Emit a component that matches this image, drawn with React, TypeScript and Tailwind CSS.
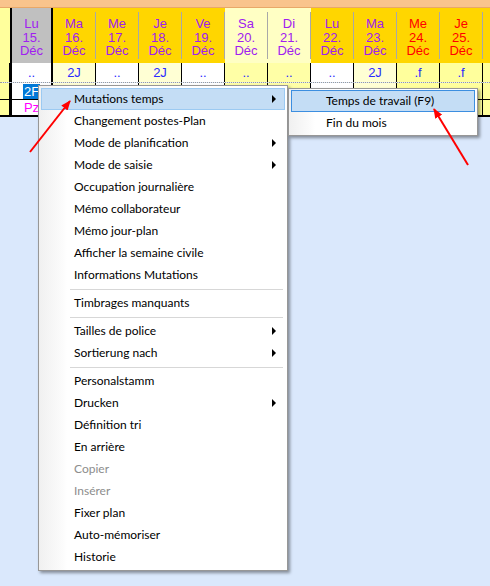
import React from 'react'

type Col = { d: string; n: string; bg: string; fg: string; sel?: boolean }

const COLS: Col[] = [
  { d: 'Lu', n: '15.', bg: 'bg-[#c0c0c0]', fg: 'text-[#a020f0]', sel: true },
  { d: 'Ma', n: '16.', bg: 'bg-[#ffd600]', fg: 'text-[#a020f0]' },
  { d: 'Me', n: '17.', bg: 'bg-[#ffd600]', fg: 'text-[#a020f0]' },
  { d: 'Je', n: '18.', bg: 'bg-[#ffd600]', fg: 'text-[#a020f0]' },
  { d: 'Ve', n: '19.', bg: 'bg-[#ffd600]', fg: 'text-[#a020f0]' },
  { d: 'Sa', n: '20.', bg: 'bg-[#ffffc4]', fg: 'text-[#a020f0]' },
  { d: 'Di', n: '21.', bg: 'bg-[#ffffc4]', fg: 'text-[#a020f0]' },
  { d: 'Lu', n: '22.', bg: 'bg-[#ffd600]', fg: 'text-[#a020f0]' },
  { d: 'Ma', n: '23.', bg: 'bg-[#ffd600]', fg: 'text-[#a020f0]' },
  { d: 'Me', n: '24.', bg: 'bg-[#ffd600]', fg: 'text-[#ff0000]' },
  { d: 'Je', n: '25.', bg: 'bg-[#ffd600]', fg: 'text-[#ff0000]' },
]

const ROW1 = ['..', '2J', '..', '2J', '..', '..', '..', '..', '2J', '.f', '.f']
const ROW1_BG = [
  'bg-white', 'bg-[#ffffd4]', 'bg-white', 'bg-[#ffffd4]', 'bg-white', 'bg-[#ffffa6]',
  'bg-[#ffffa6]', 'bg-white', 'bg-[#ffffd4]', 'bg-[#ffff9c]', 'bg-[#ffff9c]',
]
// rows 2 and 3 are mostly covered by the context menu
const ROW2 = ['2F', '', '', '', '', '', '', '', '', '', '']
const ROW3 = ['Pz', '', '', '', '', '', '', '', '', '', '']

type MenuEntry = { label?: string; sub?: boolean; disabled?: boolean; sep?: boolean; active?: boolean }

const MENU: MenuEntry[] = [
  { label: 'Mutations temps', sub: true, active: true },
  { label: 'Changement postes-Plan' },
  { label: 'Mode de planification', sub: true },
  { label: 'Mode de saisie', sub: true },
  { label: 'Occupation journalière' },
  { label: 'Mémo collaborateur' },
  { label: 'Mémo jour-plan' },
  { label: 'Afficher la semaine civile' },
  { label: 'Informations Mutations' },
  { sep: true },
  { label: 'Timbrages manquants' },
  { sep: true },
  { label: 'Tailles de police', sub: true },
  { label: 'Sortierung nach', sub: true },
  { sep: true },
  { label: 'Personalstamm' },
  { label: 'Drucken', sub: true },
  { label: 'Définition tri' },
  { label: 'En arrière' },
  { label: 'Copier', disabled: true },
  { label: 'Insérer', disabled: true },
  { label: 'Fixer plan' },
  { label: 'Auto-mémoriser' },
  { label: 'Historie' },
]

const gridFont = { fontFamily: '"Liberation Sans Narrow", "Liberation Sans", Arial, sans-serif' }
const menuFont = { fontFamily: 'Lato, "Noto Sans", sans-serif' }

// ── Grid ───────────────────────────────────────────────────────────────────────
function HeaderRow() {
  return (
    <div className="flex h-[55px]">
      <div className="w-[10px] bg-[#ffff9c]" />
      {COLS.map((c, i) => (
        <div
          key={i}
          className={`w-[43px] flex ${c.bg} ${c.sel ? 'border-x-2 border-black' : ''}`}
        >
          <div className={`flex-1 flex flex-col items-center pt-[9px] text-[13px] leading-[13.5px] ${c.fg}`}>
            <span>{c.d}</span>
            <span>{c.n}</span>
            <span>Déc</span>
          </div>
          {!c.sel && <div className="w-px my-[4px] bg-[#a8a8a8]" />}
        </div>
      ))}
      <div className="flex-1 bg-[#ffd600]" />
    </div>
  )
}

function DataRow({
  values,
  bgs,
  height,
  color,
  bottom,
}: {
  values: string[]
  bgs: string[]
  height: string
  color: string
  bottom: string
}) {
  return (
    <div className={`flex ${height} ${bottom}`}>
      <div className="w-[10px] bg-[#ffff9c] border-r border-black" />
      {values.map((v, i) => (
        <div
          key={i}
          className={`w-[43px] flex items-center justify-center text-[13px] ${bgs[i]} ${
            i === 0 ? 'border-x-2 border-black' : 'border-r border-black'
          } ${color}`}
        >
          {i === 0 && v === '2F' ? (
            <span className="bg-[#0078d7] text-white px-px leading-[15px]">{v}</span>
          ) : (
            v
          )}
        </div>
      ))}
      <div className="flex-1 bg-[#ffff9c]" />
    </div>
  )
}

// ── Menus ──────────────────────────────────────────────────────────────────────
function SubArrow() {
  return <div className="w-0 h-0 border-y-[4px] border-y-transparent border-l-[4px] border-l-black" />
}

function ContextMenu() {
  return (
    <div
      className="absolute left-[38px] top-[85px] w-[250px] border border-[#979797] bg-[linear-gradient(to_right,#f0f0f0_0px,#fcfcfc_24px,#ffffff_28px)] p-[2px] shadow-[2px_2px_3px_rgba(0,0,0,0.4)] text-[12px] text-black"
      style={menuFont}
    >
      {MENU.map((m, i) =>
        m.sep ? (
          <div key={i} className="h-[6px] flex items-center pl-[29px] pr-[2px]">
            <div className="h-px w-full bg-[#d7d7d7]" />
          </div>
        ) : (
          <div
            key={i}
            className={`h-[22px] flex items-center pl-[32px] pr-[8px] border ${
              m.active ? 'bg-[#c4ddf5] border-[#9ccaf2]' : 'border-transparent'
            } ${m.disabled ? 'text-[#8d8d8d]' : ''}`}
          >
            <span className="flex-1">{m.label}</span>
            {m.sub && <SubArrow />}
          </div>
        ),
      )}
    </div>
  )
}

function SubMenu() {
  return (
    <div
      className="absolute left-[288px] top-[88px] w-[190px] border border-[#979797] bg-[linear-gradient(to_right,#f0f0f0_0px,#fcfcfc_22px,#ffffff_26px)] px-[2px] py-px shadow-[2px_2px_3px_rgba(0,0,0,0.4)] text-[12px] text-black"
      style={menuFont}
    >
      <div className="h-[22px] flex items-center pl-[34px] border border-[#3c8ee0] bg-[#c4ddf5]">
        Temps de travail (F9)
      </div>
      <div className="h-[22px] flex items-center pl-[34px] border border-transparent">Fin du mois</div>
    </div>
  )
}

function Arrows() {
  return (
    <svg className="absolute inset-0 pointer-events-none" width="490" height="586" viewBox="0 0 490 586">
      <defs>
        <marker id="head" markerWidth="10" markerHeight="8" refX="9" refY="4" orient="auto" markerUnits="userSpaceOnUse">
          <polygon points="0,0 10,4 0,8" fill="#ff0000" />
        </marker>
      </defs>
      <line x1="30" y1="152" x2="70" y2="101" stroke="#ff0000" strokeWidth="2" markerEnd="url(#head)" />
      <line x1="468" y1="165" x2="434" y2="109" stroke="#ff0000" strokeWidth="2" markerEnd="url(#head)" />
    </svg>
  )
}

// ── App ────────────────────────────────────────────────────────────────────────
export default function App() {
  return (
    <div className="relative w-[490px] h-[586px] overflow-hidden bg-[#dae8fc]" style={gridFont}>
      <div className="h-[8px] bg-[#f9c48c] border-b border-[#e8a868]" />
      <HeaderRow />
      <DataRow
        values={ROW1}
        bgs={ROW1_BG}
        height="h-[20px]"
        color="text-[#2a2aff]"
        bottom="border-b border-dotted border-[#9a9a9a]"
      />
      <DataRow
        values={ROW2}
        bgs={ROW1_BG.map((b, i) => (i === 0 ? 'bg-white' : b))}
        height="h-[17px]"
        color="text-[#2a2aff]"
        bottom="border-b border-black"
      />
      <DataRow
        values={ROW3}
        bgs={ROW1_BG}
        height="h-[17px]"
        color="text-[#ff00ff]"
        bottom="border-b-2 border-black"
      />
      <ContextMenu />
      <SubMenu />
      <Arrows />
    </div>
  )
}
